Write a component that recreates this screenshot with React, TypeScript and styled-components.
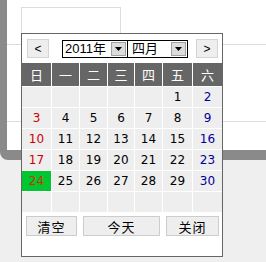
import React from 'react';
import styled, { createGlobalStyle } from 'styled-components';

const GlobalStyle = createGlobalStyle`
  html, body {
    margin: 0;
    padding: 0;
    background: #efefef;
    font-family: "Liberation Sans", "Noto Sans CJK SC", sans-serif;
  }
`;

const Page = styled.div`
  position: relative;
  width: 266px;
  height: 262px;
  overflow: hidden;
`;

const Frame = styled.div`
  width: 320px;
  height: 143px;
  background: #ffffff;
  border-left: 7px solid #8a8a8a;
  border-bottom: 10px solid #8a8a8a;
  border-bottom-left-radius: 8px;
  box-sizing: content-box;
  padding-top: 7px;
`;

const InputBox = styled.div`
  margin-left: 14px;
  width: 98px;
  height: 26px;
  border: 1px solid #dddddd;
  border-bottom: none;
`;

const Rule = styled.div<{ $top: number }>`
  margin-top: ${p => p.$top}px;
  height: 1px;
  background: #dddddd;
`;

const Popup = styled.div`
  position: absolute;
  left: 21px;
  top: 33px;
  width: 200px;
  height: 222px;
  border: 1px solid #666666;
  background: #ffffff;
`;

const NavRow = styled.div`
  display: flex;
  align-items: center;
  justify-content: space-between;
  height: 19px;
  margin: 5px 4px 5px 5px;
`;

const NavButton = styled.div`
  width: 20px;
  height: 17px;
  border: 1px solid #d4d4d4;
  background: #eeeeee;
  display: flex;
  align-items: center;
  justify-content: center;
  font-size: 12px;
  color: #000;
`;

const Selects = styled.div`
  display: flex;
  margin-left: 4px;
`;

const Select = styled.div<{ $width: number; $pad: number }>`
  width: ${p => p.$width}px;
  height: 16px;
  border: 1px solid #000000;
  margin-right: -1px;
  display: flex;
  align-items: center;
  justify-content: space-between;
  padding-left: ${p => p.$pad}px;
  box-sizing: content-box;
`;

const SelectText = styled.span`
  font-size: 13px;
  line-height: 16px;
  color: #000;
  font-family: "Liberation Sans", "Noto Sans CJK SC", sans-serif;
`;

const Arrow = styled.div`
  width: 15px;
  height: 14px;
  margin-right: 1px;
  background: #dcdcdc;
  border: 1px solid #a0a0a0;
  box-sizing: border-box;
  display: flex;
  align-items: center;
  justify-content: center;
`;

const Grid = styled.div`
  display: grid;
  grid-template-columns: 29px 27px 27px 26px 27px 29px 29px;
  grid-template-rows: 23px;
  grid-auto-rows: 20px;
  gap: 1px;
  background: #ffffff;
`;

const HeadCell = styled.div`
  background: #666666;
  color: #ffffff;
  display: flex;
  align-items: center;
  justify-content: center;
  font-size: 13px;
  font-family: "Noto Sans CJK SC", sans-serif;
`;

const DayCell = styled.div<{ $color: string; $today?: boolean }>`
  background: ${p => (p.$today ? '#00c632' : '#eeeeee')};
  color: ${p => p.$color};
  display: flex;
  align-items: center;
  justify-content: center;
  font-size: 12px;
  font-family: "DejaVu Sans", sans-serif;
`;

const Footer = styled.div`
  display: flex;
  gap: 6px;
  margin: 4px 3px 0 4px;
`;

const FootButton = styled.div<{ $width: number }>`
  width: ${p => p.$width}px;
  height: 18px;
  border: 1px solid #cccccc;
  background: #eeeeee;
  display: flex;
  align-items: center;
  justify-content: center;
  font-size: 13px;
  letter-spacing: 1px;
  font-family: "Noto Sans CJK SC", sans-serif;
  color: #000;
`;

const weekdays = ['日', '一', '二', '三', '四', '五', '六'];

const days: (number | null)[] = [
  null, null, null, null, null, 1, 2,
  3, 4, 5, 6, 7, 8, 9,
  10, 11, 12, 13, 14, 15, 16,
  17, 18, 19, 20, 21, 22, 23,
  24, 25, 26, 27, 28, 29, 30,
  null, null, null, null, null, null, null,
];

const colorFor = (i: number) => {
  if (i % 7 === 0) return '#cc0000';
  if (i % 7 === 6) return '#000099';
  return '#000000';
};

const DownArrow = () => (
  <svg width="7" height="4" viewBox="0 0 7 4">
    <polygon points="0,0 7,0 3.5,4" fill="#000" />
  </svg>
);

const App = () => (
  <Page>
    <GlobalStyle />
    <Frame>
      <InputBox />
      <Rule $top={10} />
      <Rule $top={76} />
    </Frame>
    <Popup>
      <NavRow>
        <NavButton>&lt;</NavButton>
        <Selects>
          <Select $width={62} $pad={2}>
            <SelectText>2011年</SelectText>
            <Arrow><DownArrow /></Arrow>
          </Select>
          <Select $width={55} $pad={4}>
            <SelectText>四月</SelectText>
            <Arrow><DownArrow /></Arrow>
          </Select>
        </Selects>
        <NavButton>&gt;</NavButton>
      </NavRow>
      <Grid>
        {weekdays.map(w => <HeadCell key={w}>{w}</HeadCell>)}
        {days.map((d, i) => (
          <DayCell key={i} $color={d === 24 ? '#cc3300' : colorFor(i)} $today={d === 24}>
            {d ?? ''}
          </DayCell>
        ))}
      </Grid>
      <Footer>
        <FootButton $width={49}>清空</FootButton>
        <FootButton $width={75}>今天</FootButton>
        <FootButton $width={51}>关闭</FootButton>
      </Footer>
    </Popup>
  </Page>
);

export default App;
